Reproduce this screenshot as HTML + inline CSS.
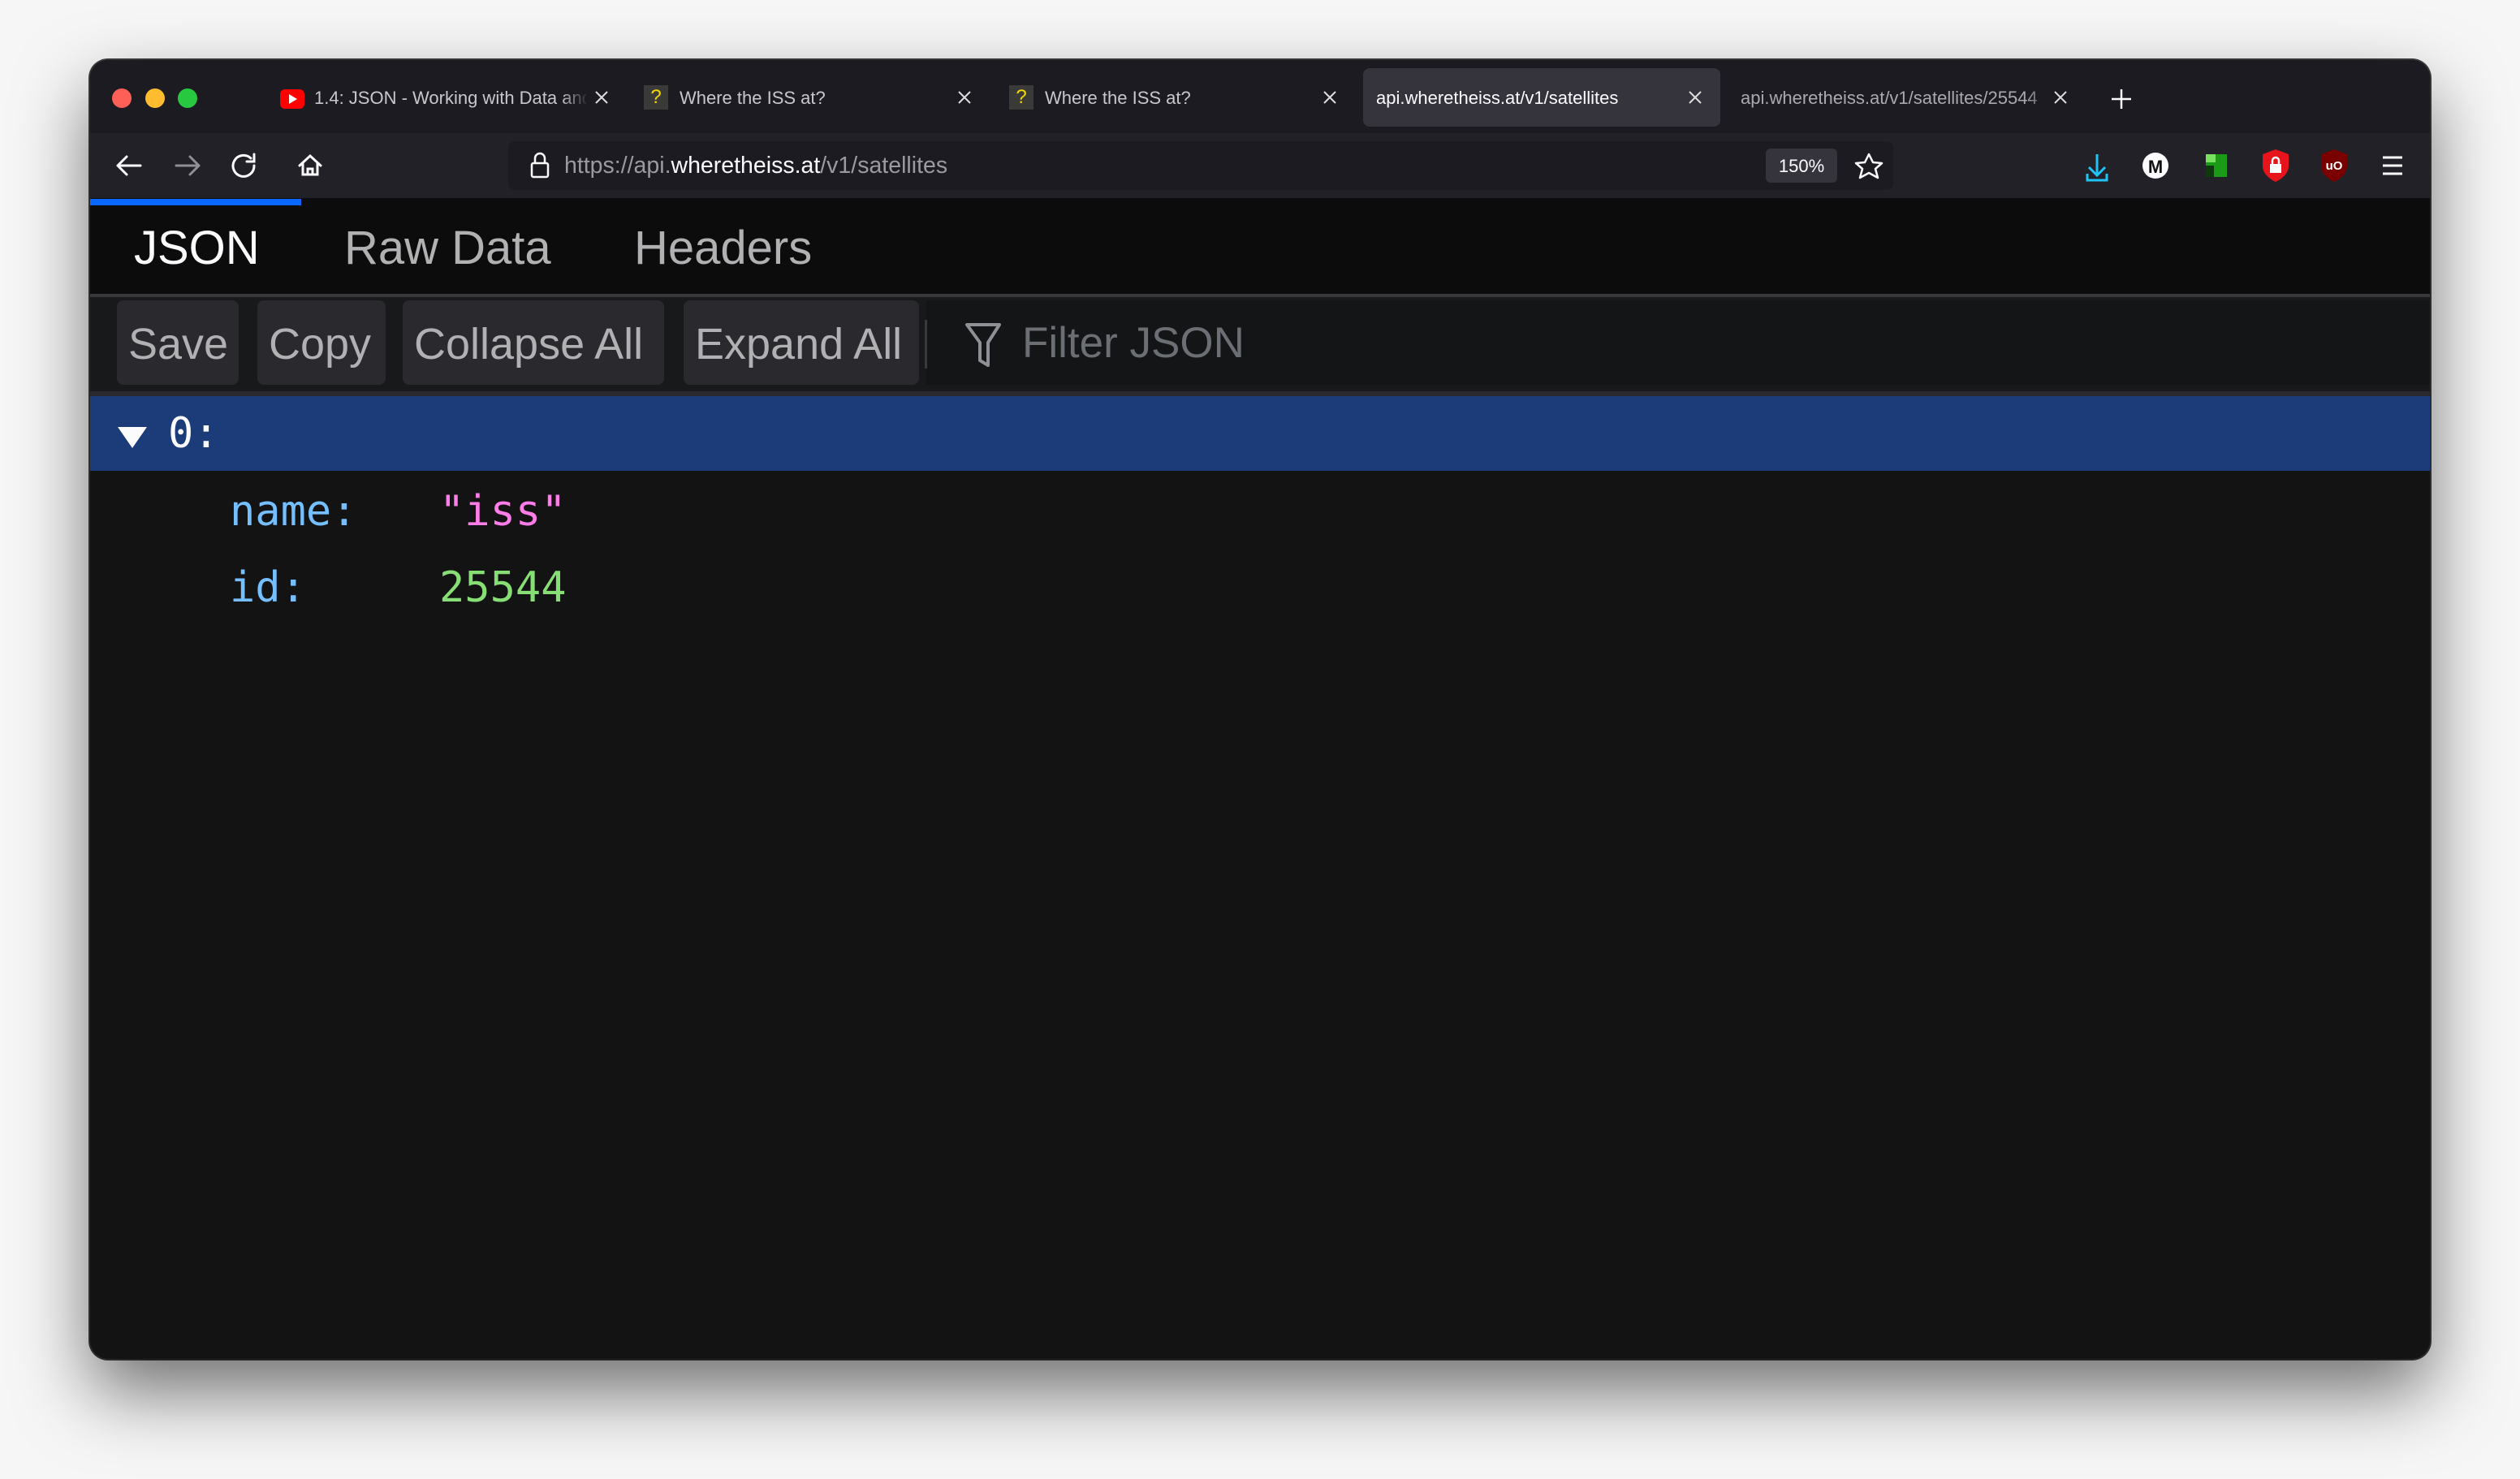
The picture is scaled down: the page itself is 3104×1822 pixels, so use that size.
<!DOCTYPE html>
<html><head><meta charset="utf-8"><style>
*{margin:0;padding:0;box-sizing:border-box}
body{width:3104px;height:1822px;background:#f6f6f6;position:relative;overflow:hidden;font-family:"Liberation Sans",sans-serif}
.win{position:absolute;left:111px;top:74px;width:2882px;height:1600px;border-radius:22px;background:#131313;overflow:hidden;box-shadow:0 40px 90px rgba(0,0,0,.55),0 0 0 2px #3c3c3c}
.a{position:absolute;white-space:nowrap}
.tabbar{position:absolute;left:0;top:0;width:100%;height:90px;background:#1c1b21}
.tool{position:absolute;left:0;top:90px;width:100%;height:80px;background:#222127}
.tt{font-size:22px;color:#c8c8cc;top:34px}
.x{top:36px}
.q{width:30px;height:30px;background:#3a3a38;color:#f3d800;font-size:24px;text-align:center;line-height:30px;top:31px}
.mono{font-family:"DejaVu Sans Mono","Liberation Mono",monospace}
.btn{position:absolute;top:296px;height:104px;background:#2a2a2e;border-radius:8px;color:#b1b1b3;font-size:54px;line-height:108px;padding:0 14px}
</style></head><body>
<div class="win">
 <div class="tabbar"></div>
 <div class="a" style="left:27px;top:35px;width:24px;height:24px;border-radius:50%;background:#fe5f57"></div>
 <div class="a" style="left:68px;top:35px;width:24px;height:24px;border-radius:50%;background:#febc2e"></div>
 <div class="a" style="left:108px;top:35px;width:24px;height:24px;border-radius:50%;background:#28c840"></div>
 <!-- tab1 -->
 <div class="a" style="left:234px;top:36px;width:30px;height:24px;border-radius:6px;background:#f00"></div>
 <div class="a" style="left:245px;top:42px;width:0;height:0;border-left:10px solid #fff;border-top:6px solid transparent;border-bottom:6px solid transparent"></div>
 <div class="a tt" style="left:276px;width:335px;overflow:hidden">1.4: JSON - Working with Data and APIs</div>
 <div class="a" style="left:580px;top:20px;width:34px;height:50px;background:linear-gradient(90deg,rgba(28,27,33,0),#1c1b21)"></div>
 <svg class="a x" style="left:620px" width="20" height="20"><path d="M3 3l14 14M17 3L3 17" stroke="#ddd" stroke-width="2"/></svg>
 <div class="a q" style="left:682px">?</div>
 <div class="a tt" style="left:726px">Where the ISS at?</div>
 <svg class="a x" style="left:1067px" width="20" height="20"><path d="M3 3l14 14M17 3L3 17" stroke="#ddd" stroke-width="2"/></svg>
 <div class="a q" style="left:1132px">?</div>
 <div class="a tt" style="left:1176px">Where the ISS at?</div>
 <svg class="a x" style="left:1517px" width="20" height="20"><path d="M3 3l14 14M17 3L3 17" stroke="#ddd" stroke-width="2"/></svg>
 <div class="a" style="left:1568px;top:10px;width:440px;height:72px;background:#35343d;border-radius:8px"></div>
 <div class="a tt" style="left:1584px;color:#fbfbfe">api.wheretheiss.at/v1/satellites</div>
 <svg class="a x" style="left:1967px" width="20" height="20"><path d="M3 3l14 14M17 3L3 17" stroke="#ddd" stroke-width="2"/></svg>
 <div class="a tt" style="left:2033px;width:380px;overflow:hidden;color:#a9a9ae">api.wheretheiss.at/v1/satellites/25544</div>
 <div class="a" style="left:2385px;top:20px;width:30px;height:50px;background:linear-gradient(90deg,rgba(28,27,33,0),#1c1b21)"></div>
 <svg class="a x" style="left:2417px" width="20" height="20"><path d="M3 3l14 14M17 3L3 17" stroke="#ddd" stroke-width="2"/></svg>
 <svg class="a" style="left:2488px;top:34px" width="28" height="28"><path d="M14 2v24M2 14h24" stroke="#fbfbfe" stroke-width="2.5"/></svg>
 <!-- toolbar -->
 <div class="tool"></div>
 <svg class="a" style="left:0;top:90px" width="2882" height="80">
  <g stroke="#fbfbfe" stroke-width="3" fill="none" stroke-linecap="round">
   <path d="M34 40h28M34 40l11-11M34 40l11 11"/>
   <path d="M106 40h28M134 40l-11-11M134 40l-11 11" stroke="#8f8f95"/>
   <path d="M198 31a13 13 0 1 0 4 9M202 26v9h-9"/>
   <path d="M258 40l13-12 13 12M262 37v14h18v-14M268 51v-7h6v7"/>
  </g>
  <rect x="515" y="10" width="1706" height="60" rx="8" fill="#1c1b22"/>
  <g stroke="#fbfbfe" stroke-width="2.5" fill="none">
   <rect x="544" y="37" width="20" height="17" rx="2"/><path d="M548 37v-6a6 6 0 0 1 12 0v6"/>
  </g>
  <rect x="2064" y="19" width="88" height="42" rx="6" fill="#35343d"/>
  <text x="2108" y="48" font-size="22" fill="#fbfbfe" text-anchor="middle" font-family="Liberation Sans">150%</text>
  <path d="M2191 26l5 10 11 1-8 7 3 11-11-6-11 6 3-11-8-7 11-1z" stroke="#fbfbfe" stroke-width="2.5" fill="none" stroke-linejoin="round"/>
  <g stroke="#1ec4f5" stroke-width="3" fill="none"><path d="M2472 26v26M2462 42l10 10 10-10M2460 50v8h24v-8"/></g>
  <circle cx="2544" cy="40" r="16" fill="#fbfbfe"/>
  <text x="2544" y="49" font-size="22" font-weight="bold" text-anchor="middle" fill="#111" font-family="Liberation Sans">M</text>
  <rect x="2606" y="26" width="26" height="28" fill="#1a9a16"/><rect x="2606" y="26" width="12" height="10" fill="#7ae060"/><rect x="2606" y="40" width="10" height="14" fill="#0c3a0a"/>
  <path d="M2676 26l16-6 16 6v14c0 10-8 16-16 20-8-4-16-10-16-20z" fill="#e8141c"/>
  <rect x="2685" y="38" width="14" height="11" fill="#fff"/><path d="M2688 38v-4a4 4 0 0 1 8 0v4" stroke="#fff" stroke-width="2.5" fill="none"/>
  <path d="M2748 26l16-6 16 6v14c0 10-8 16-16 20-8-4-16-10-16-20z" fill="#7a0000"/>
  <text x="2764" y="45" font-size="15" font-weight="bold" text-anchor="middle" fill="#fff" font-family="Liberation Sans">uO</text>
  <g stroke="#fbfbfe" stroke-width="3"><path d="M2824 30h24M2824 40h24M2824 50h24"/></g>
 </svg>
 <div class="a" style="left:584px;top:114px;font-size:28.5px;color:#9a9aa0">https://api.<span style="color:#fbfbfe">wheretheiss.at</span>/v1/satellites</div>
 <!-- content -->
 <div class="a" style="left:0;top:170px;width:100%;height:118px;background:#0c0c0d"></div>
 <div class="a" style="left:0;top:171px;width:260px;height:8px;background:#0a68ff"></div>
 <div class="a" style="left:54px;top:198px;font-size:58px;color:#fbfbfe">JSON</div>
 <div class="a" style="left:313px;top:198px;font-size:58px;color:#b1b1b3">Raw Data</div>
 <div class="a" style="left:670px;top:198px;font-size:58px;color:#b1b1b3">Headers</div>
 <div class="a" style="left:0;top:288px;width:100%;height:4px;background:#38383d"></div>
 <div class="a" style="left:0;top:292px;width:100%;height:116px;background:#18191b"></div>
 <div class="a" style="left:1030px;top:296px;width:1852px;height:104px;background:#141517"></div>
 <div class="btn" style="left:33px;width:150px">Save</div>
 <div class="btn" style="left:206px;width:158px">Copy</div>
 <div class="btn" style="left:385px;width:322px">Collapse All</div>
 <div class="btn" style="left:731px;width:290px">Expand All</div>
 <div class="a" style="left:1028px;top:320px;width:3px;height:60px;background:#3a3a3e"></div>
 <svg class="a" style="left:1076px;top:322px" width="50" height="60"><path d="M4 4h40l-14 22v28l-10-6v-22z" stroke="#8f8f95" stroke-width="4" fill="none" stroke-linejoin="round"/></svg>
 <div class="a" style="left:1148px;top:318px;font-size:53px;color:#6b6f74">Filter JSON</div>
 <div class="a" style="left:0;top:408px;width:100%;height:6px;background:#2a2a2e"></div>
 <div class="a" style="left:0;top:414px;width:100%;height:92px;background:#1b3c78"></div>
 <div class="a" style="left:34px;top:452px;width:0;height:0;border-top:26px solid #fbfbfe;border-left:18px solid transparent;border-right:18px solid transparent"></div>
 <div class="a mono" style="left:96px;top:430px;font-size:52px;color:#fbfbfe">0:</div>
 <div class="a mono" style="left:172px;top:526px;font-size:52px;color:#75bfff">name:</div>
 <div class="a mono" style="left:430px;top:526px;font-size:52px;color:#ff7de9">"iss"</div>
 <div class="a mono" style="left:172px;top:620px;font-size:52px;color:#75bfff">id:</div>
 <div class="a mono" style="left:430px;top:620px;font-size:52px;color:#86de74">25544</div>
</div>
</body></html>
